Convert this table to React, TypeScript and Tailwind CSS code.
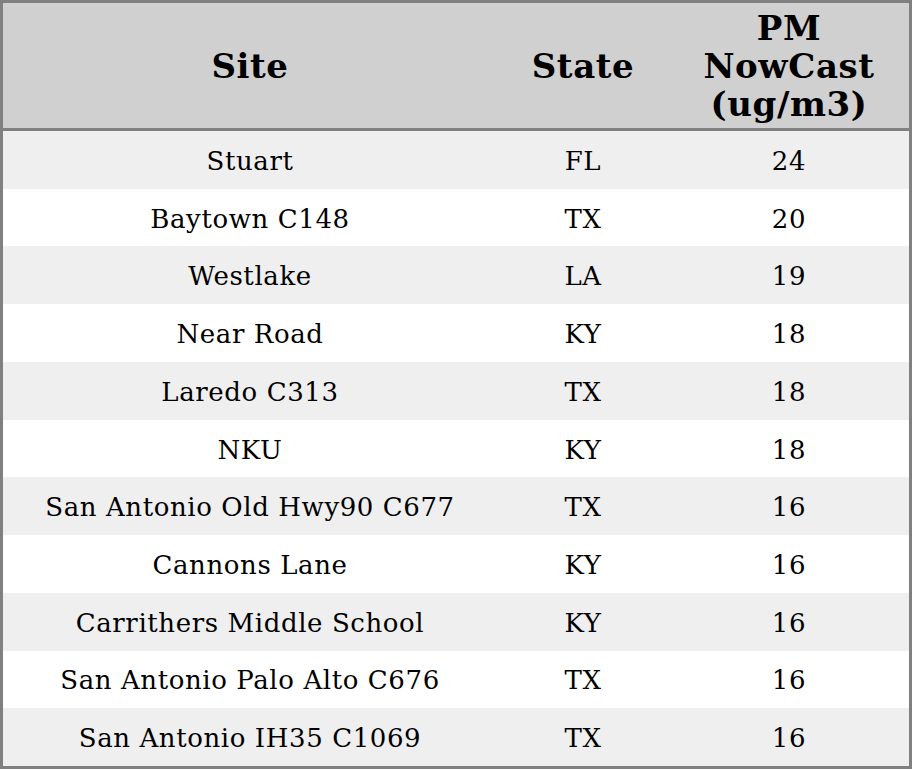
const rows: [string, string, number][] = [
  ["Stuart", "FL", 24],
  ["Baytown C148", "TX", 20],
  ["Westlake", "LA", 19],
  ["Near Road", "KY", 18],
  ["Laredo C313", "TX", 18],
  ["NKU", "KY", 18],
  ["San Antonio Old Hwy90 C677", "TX", 16],
  ["Cannons Lane", "KY", 16],
  ["Carrithers Middle School", "KY", 16],
  ["San Antonio Palo Alto C676", "TX", 16],
  ["San Antonio IH35 C1069", "TX", 16],
];

export default function App() {
  return (
    <div
      className="w-[912px] h-[769px] border-[3px] border-[#808080] bg-white text-black flex flex-col"
      style={{ fontFamily: "'DejaVu Serif', 'Liberation Serif', serif" }}
    >
      {/* header */}
      <div className="grid grid-cols-[494px_172px_240px] h-[125px] shrink-0 bg-[#d0d0d0] border-b-[3px] border-[#808080] box-content text-[34px] font-bold leading-[38px] tracking-[0.6px]">
        <div className="flex items-center justify-center">Site</div>
        <div className="flex items-center justify-center">State</div>
        <div className="flex items-center justify-center text-center">
          PM
          <br />
          NowCast
          <br />
          (ug/m3)
        </div>
      </div>

      {/* body */}
      <div className="flex-1 flex flex-col text-[26px] tracking-[0.6px]">
        {rows.map(([site, state, pm], i) => (
          <div
            key={site}
            className={
              "flex-1 grid grid-cols-[494px_172px_240px] items-center text-center pt-[3px] " +
              (i % 2 === 0 ? "bg-[#efefef]" : "bg-white")
            }
          >
            <div>{site}</div>
            <div>{state}</div>
            <div>{pm}</div>
          </div>
        ))}
      </div>
    </div>
  );
}
